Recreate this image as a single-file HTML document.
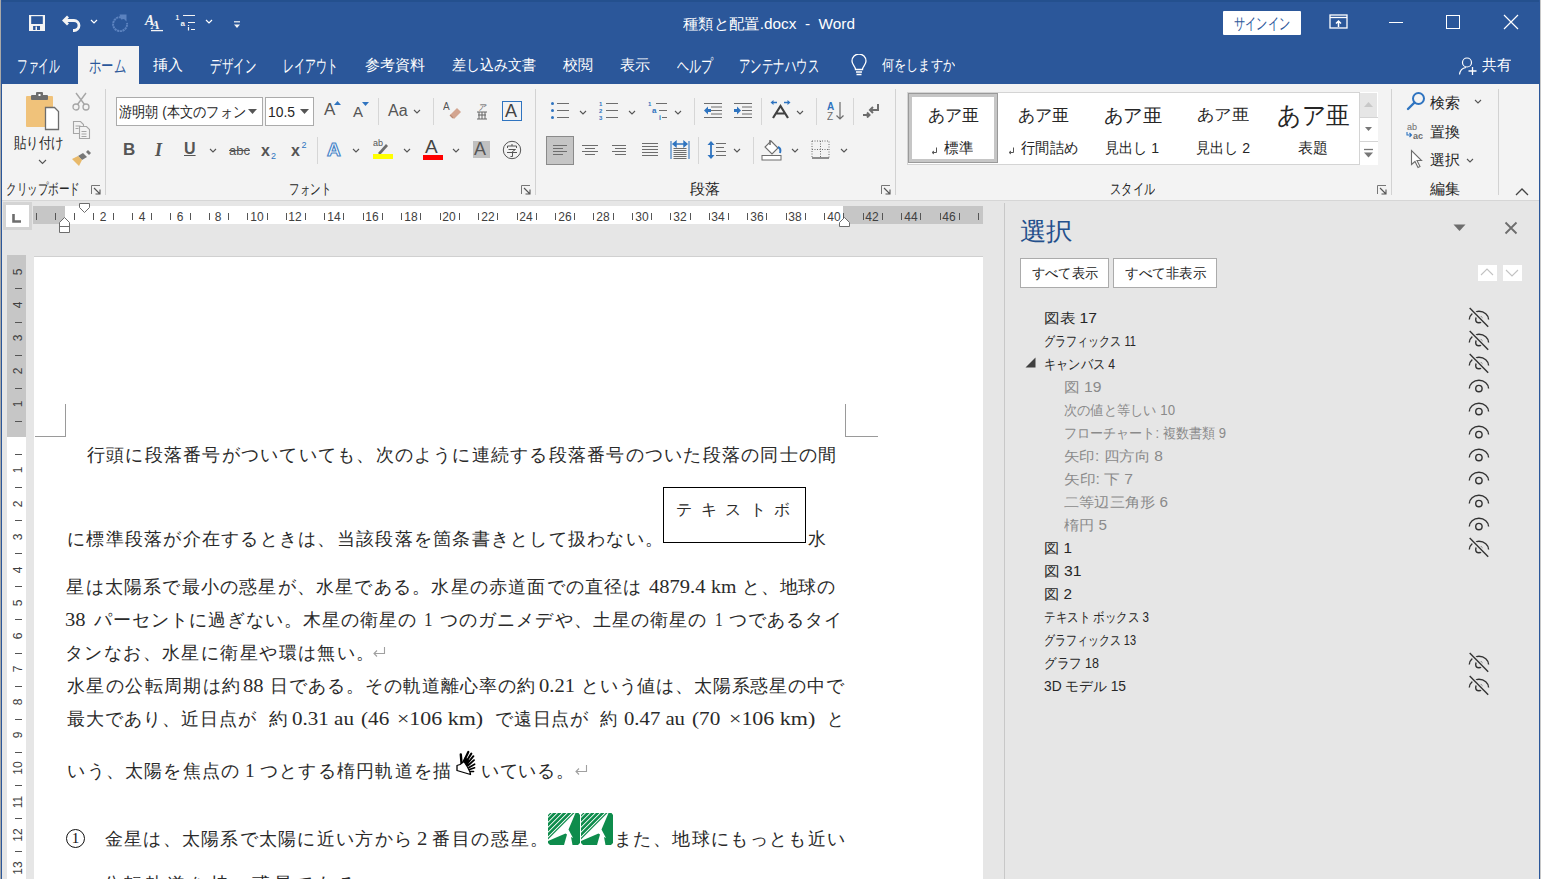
<!DOCTYPE html>
<html><head><meta charset="utf-8">
<style>
*{box-sizing:border-box;margin:0;padding:0}
html,body{width:1541px;height:879px;overflow:hidden;background:#e6e6e6}
body{position:relative;font-family:"Liberation Sans",sans-serif;color:#262626}
.a{position:absolute;white-space:nowrap}
#title{left:0;top:0;width:1541px;height:84px;background:#2b579a}
.tb{color:#fff;font-size:15px;line-height:20px}
.tab{color:#fff;font-size:15px;line-height:20px;top:55px}
#ribbon{left:0;top:84px;width:1541px;height:117px;background:#f3f3f3;border-bottom:1px solid #d6d6d6}
.sep{position:absolute;width:1px;background:#d2d2d2}
.glab{font-size:14px;line-height:18px;color:#262626;top:180px}
.lbl{font-size:14px;line-height:18px;color:#262626}
#doc{left:0;top:201px;width:1004px;height:678px;background:#e6e6e6}
#page{left:34px;top:256px;width:949px;height:640px;background:#fff;border-top:1px solid #d0d0d0}
.t{font-family:"Liberation Serif",serif;font-size:18px;line-height:22px;color:#2a2a2a}
.j{text-align:justify;text-align-last:justify}
#pane{left:1004px;top:203px;width:533px;height:678px;background:#e6e6e6;border-left:1px solid #c8c8c8}
.it{font-size:14px;line-height:18px;color:#262626;left:1044px}
.dim{color:#8a8a8a;left:1064px}
.rn{font-size:12px;line-height:14px;color:#404040;text-align:center}
.vn{font-size:12px;line-height:20px;width:20px;text-align:center;color:#404040;transform:rotate(-90deg);margin-left:2px}
</style></head><body>

<!-- title bar + tabs -->
<div id="title" class="a"></div>
<div class="a" style="left:0;top:0;width:1541px;height:2px;background:#24508e"></div>

<div class="a tb" id="ttl" style="left:683px;top:14px;--w:172;transform:scaleX(1.0232);transform-origin:0 0">種類と配置.docx&nbsp; -&nbsp; Word</div>
<div class="a" style="left:1223px;top:11px;width:78px;height:24px;background:#fff;border-radius:1px"></div>
<div class="a" id="sgn" style="left:1234px;top:13.5px;font-size:16px;line-height:20px;color:#2b579a;--w:56;transform:scaleX(0.7000);transform-origin:0 0">サインイン</div>


<!-- QAT icons -->
<svg class="a" style="left:29px;top:15px" width="17" height="17" viewBox="0 0 17 17"><rect x="0" y="0" width="16" height="16" fill="#f4f4f4"/><rect x="2.2" y="1.2" width="11.6" height="7.8" fill="#2b579a"/><rect x="4.1" y="11" width="6.9" height="4" fill="#2b579a"/><rect x="6.5" y="11.5" width="1.5" height="3.5" fill="#f4f4f4"/></svg>
<svg class="a" style="left:62px;top:15px" width="20" height="17" viewBox="0 0 20 17"><path d="M6 1.5L2 5.5 6 9.5" fill="none" stroke="#f4f4f4" stroke-width="2.8"/><path d="M3 5.5h9a5 5 0 0 1 0 10h-1" fill="none" stroke="#f4f4f4" stroke-width="2.8"/></svg>
<svg class="a" style="left:90px;top:19px" width="8" height="6" viewBox="0 0 8 6"><path d="M1 1l3 3 3-3" fill="none" stroke="#fff" stroke-width="1.2"/></svg>
<svg class="a" style="left:111px;top:14px" width="18" height="18" viewBox="0 0 18 18"><path d="M10 3.2A7 7 0 1 0 16 9" fill="none" stroke="#5b82bf" stroke-width="2" stroke-dasharray="2.2 0.6"/><path d="M8.5 0.5h7v7l-2.5-2.5-3 0.5z" fill="#5b82bf"/></svg>
<svg class="a" style="left:144px;top:13px" width="22" height="19" viewBox="0 0 22 19"><text x="1" y="12" font-family="Liberation Serif" font-style="italic" font-weight="bold" font-size="14" fill="#f4f4f4">A</text><text x="7" y="16" font-family="Liberation Serif" font-style="italic" font-weight="bold" font-size="13" fill="#f4f4f4">A</text><path d="M7 17.6h12" stroke="#f4f4f4" stroke-width="1.3"/></svg>
<svg class="a" style="left:175px;top:13px" width="22" height="19" viewBox="0 0 22 19"><text x="0.5" y="6.5" font-size="6.5" font-weight="bold" fill="#f4f4f4" font-family="Liberation Sans">1</text><text x="5.5" y="12.5" font-size="8" font-weight="bold" fill="#f4f4f4" font-family="Liberation Sans">a</text><path d="M13.5 14v3.5" stroke="#f4f4f4" stroke-width="1.2"/><path d="M13.5 12v1" stroke="#f4f4f4" stroke-width="1.2"/><path d="M8 2.5h12M13 9.5h7M16 16.5h4" stroke="#f4f4f4" stroke-width="1.2"/></svg>
<svg class="a" style="left:205px;top:19px" width="8" height="6" viewBox="0 0 8 6"><path d="M1 1l3 3 3-3" fill="none" stroke="#fff" stroke-width="1.2"/></svg>
<svg class="a" style="left:233px;top:21px" width="8" height="8" viewBox="0 0 8 8"><path d="M1 0.8h6" stroke="#f4f4f4" stroke-width="1.2"/><path d="M1 3.5h6L4 7z" fill="#f4f4f4"/></svg>
<!-- window controls -->
<svg class="a" style="left:1329px;top:14px" width="19" height="15" viewBox="0 0 19 15"><rect x="1" y="1" width="17" height="13" fill="none" stroke="#fff" stroke-width="1.3"/><path d="M1 3.5h17" stroke="#fff" stroke-width="1.3"/><path d="M9.5 13V7M7 9.5l2.5-2.5 2.5 2.5" fill="none" stroke="#fff" stroke-width="1.5"/></svg>
<div class="a" style="left:1389px;top:22px;width:14px;height:1px;background:#fff"></div>
<div class="a" style="left:1446px;top:15px;width:14px;height:14px;border:1px solid #fff"></div>
<svg class="a" style="left:1503px;top:14px" width="16" height="16" viewBox="0 0 16 16"><path d="M1 1l14 14M15 1L1 15" stroke="#fff" stroke-width="1.2"/></svg>
<!-- bulb & share -->
<svg class="a" style="left:850px;top:54px" width="18" height="22" viewBox="0 0 18 22"><path d="M5.5 15.5c0-3-3.5-4.5-3.5-8.5a7 7 0 0 1 14 0c0 4-3.5 5.5-3.5 8.5z" fill="none" stroke="#fff" stroke-width="1.3"/><path d="M6 18h6M6.5 20.5h5" stroke="#fff" stroke-width="1.3"/></svg>
<svg class="a" style="left:1458px;top:56px" width="20" height="20" viewBox="0 0 20 20"><circle cx="9" cy="6.5" r="4.5" fill="none" stroke="#fff" stroke-width="1.2"/><path d="M1.5 18.5c0.5-4 3-6.5 6.5-7" fill="none" stroke="#fff" stroke-width="1.2"/><path d="M14.5 11v8M10.5 15h8" stroke="#fff" stroke-width="1.3"/></svg>

<!-- tabs -->
<div class="a" style="left:78px;top:46px;width:61px;height:38px;background:#f3f3f3"></div>
<div class="a tab" id="tab0" style="left:17px;font-size:18px;top:55.5px;--w:43;transform:scaleX(0.5972);transform-origin:0 0">ファイル</div>
<div class="a tab" id="tab1" style="left:89px;color:#2b579a;font-size:18px;top:55.5px;--w:37;transform:scaleX(0.6852);transform-origin:0 0">ホーム</div>
<div class="a tab" id="tab2" style="left:153px;--w:30;transform:scaleX(1.0000);transform-origin:0 0">挿入</div>
<div class="a tab" id="tab3" style="left:210px;font-size:18px;top:55.5px;--w:46;transform:scaleX(0.6389);transform-origin:0 0">デザイン</div>
<div class="a tab" id="tab4" style="left:283px;font-size:18px;top:55.5px;--w:55;transform:scaleX(0.6111);transform-origin:0 0">レイアウト</div>
<div class="a tab" id="tab5" style="left:365px;--w:60;transform:scaleX(1.0000);transform-origin:0 0">参考資料</div>
<div class="a tab" id="tab6" style="left:452px;--w:84;transform:scaleX(0.9333);transform-origin:0 0">差し込み文書</div>
<div class="a tab" id="tab7" style="left:563px;--w:30;transform:scaleX(1.0000);transform-origin:0 0">校閲</div>
<div class="a tab" id="tab8" style="left:620px;--w:30;transform:scaleX(1.0000);transform-origin:0 0">表示</div>
<div class="a tab" id="tab9" style="left:677px;font-size:18px;top:55.5px;--w:36;transform:scaleX(0.6667);transform-origin:0 0">ヘルプ</div>
<div class="a tab" id="tab10" style="left:739px;font-size:18px;top:55.5px;--w:80;transform:scaleX(0.6349);transform-origin:0 0">アンテナハウス</div>
<div class="a tab" id="tab11" style="left:882px;--w:73;transform:scaleX(0.8111);transform-origin:0 0">何をしますか</div>
<div class="a tab" id="tab12" style="left:1482px;--w:29;transform:scaleX(0.9667);transform-origin:0 0">共有</div>

<!-- ribbon -->
<div id="ribbon" class="a"></div>
<div class="sep" style="left:105px;top:89px;height:106px"></div>
<div class="sep" style="left:535px;top:89px;height:106px"></div>
<div class="sep" style="left:895px;top:89px;height:106px"></div>
<div class="sep" style="left:1391px;top:89px;height:106px"></div>
<div class="sep" style="left:1498px;top:89px;height:106px"></div>
<div class="a glab" id="g1" style="left:6px;top:180px;font-size:15px;--w:74;transform:scaleX(0.7048);transform-origin:0 0">クリップボード</div>
<div class="a glab" id="g2" style="left:289px;top:180px;font-size:15px;--w:42;transform:scaleX(0.7000);transform-origin:0 0">フォント</div>
<div class="a glab" id="g3" style="left:690px;top:180px;font-size:15px;--w:30;transform:scaleX(1.0000);transform-origin:0 0">段落</div>
<div class="a glab" id="g4" style="left:1110px;top:180px;font-size:15px;--w:45;transform:scaleX(0.7500);transform-origin:0 0">スタイル</div>
<div class="a glab" id="g5" style="left:1430px;top:180px;font-size:15px;--w:30;transform:scaleX(1.0000);transform-origin:0 0">編集</div>
<div class="a lbl" id="g6" style="left:14px;top:134px;font-size:15px;--w:50;transform:scaleX(0.8333);transform-origin:0 0">貼り付け</div>


<!-- font boxes -->
<div class="a" style="left:116px;top:97px;width:147px;height:29px;background:#fff;border:1px solid #ababab"></div>
<div class="a" style="left:265px;top:97px;width:49px;height:29px;background:#fff;border:1px solid #ababab"></div>
<div class="a lbl" id="fb1" style="left:119px;top:103px;font-size:15px;--w:127;transform:scaleX(0.8809);transform-origin:0 0">游明朝 (本文のフォン</div>
<div class="a lbl" id="fb2" style="left:268px;top:103px;font-size:15px;--w:27;transform:scaleX(0.9246);transform-origin:0 0">10.5</div>
<!-- clipboard icons -->
<svg class="a" style="left:25px;top:92px" width="37" height="39" viewBox="0 0 37 39"><rect x="1" y="4" width="27" height="31" rx="1" fill="#f0c27a"/><rect x="6" y="3" width="17" height="5" rx="1" fill="#6d6d6d"/><rect x="11" y="0" width="7" height="5" rx="1" fill="#6d6d6d"/><rect x="13.5" y="2" width="2" height="2" fill="#fff"/><path d="M20.5 15.5h9l4 4v18h-13z" fill="#fff" stroke="#6d6d6d" stroke-width="1.3"/></svg>
<svg class="a" style="left:38px;top:159px" width="9" height="6" viewBox="0 0 9 6"><path d="M1 1l3.5 3.5L8 1" fill="none" stroke="#555" stroke-width="1.1"/></svg>
<svg class="a" style="left:72px;top:92px" width="18" height="19" viewBox="0 0 18 19"><circle cx="4" cy="15" r="3" fill="none" stroke="#a6a6a6" stroke-width="1.3"/><circle cx="14" cy="15" r="3" fill="none" stroke="#a6a6a6" stroke-width="1.3"/><path d="M5.5 12.5L14 1M12.5 12.5L4 1" stroke="#a6a6a6" stroke-width="1.4"/></svg>
<svg class="a" style="left:72px;top:120px" width="19" height="20" viewBox="0 0 19 20"><path d="M1.5 1.5h7l3 3v9h-10z" fill="#f3f3f3" stroke="#a6a6a6" stroke-width="1.1"/><path d="M7.5 6.5h7l3 3v9h-10z" fill="#f3f3f3" stroke="#a6a6a6" stroke-width="1.1"/><path d="M3.5 6h5M3.5 8.5h3M9.5 11.5h5M9.5 14h5M9.5 16.5h5" stroke="#a6a6a6" stroke-width="1"/></svg>
<svg class="a" style="left:72px;top:150px" width="19" height="17" viewBox="0 0 19 17"><path d="M11 3l4 4-5 3-4-4z" fill="#777"/><path d="M14 2l2-2 3 3-2 2z" fill="#777"/><path d="M6 6l4 4-3 6L0 9z" fill="#e8b96a"/></svg>
<!-- launchers -->
<svg class="a" style="left:91px;top:185px" width="10" height="10" viewBox="0 0 10 10"><path d="M0.5 9V0.5H9" fill="none" stroke="#777" stroke-width="1"/><path d="M3 3l5.5 5.5M9 4.5V9H4.5" fill="none" stroke="#555" stroke-width="1.1"/></svg>
<svg class="a" style="left:521px;top:185px" width="10" height="10" viewBox="0 0 10 10"><path d="M0.5 9V0.5H9" fill="none" stroke="#777" stroke-width="1"/><path d="M3 3l5.5 5.5M9 4.5V9H4.5" fill="none" stroke="#555" stroke-width="1.1"/></svg>
<svg class="a" style="left:881px;top:185px" width="10" height="10" viewBox="0 0 10 10"><path d="M0.5 9V0.5H9" fill="none" stroke="#777" stroke-width="1"/><path d="M3 3l5.5 5.5M9 4.5V9H4.5" fill="none" stroke="#555" stroke-width="1.1"/></svg>
<svg class="a" style="left:1377px;top:185px" width="10" height="10" viewBox="0 0 10 10"><path d="M0.5 9V0.5H9" fill="none" stroke="#777" stroke-width="1"/><path d="M3 3l5.5 5.5M9 4.5V9H4.5" fill="none" stroke="#555" stroke-width="1.1"/></svg>
<!-- font group -->
<svg class="a" style="left:248px;top:109px" width="9" height="5" viewBox="0 0 9 5"><path d="M0 0h9L4.5 5z" fill="#555"/></svg>
<svg class="a" style="left:300px;top:109px" width="9" height="5" viewBox="0 0 9 5"><path d="M0 0h9L4.5 5z" fill="#555"/></svg>
<div class="a" style="left:324px;top:101px;font-size:17px;line-height:18px;color:#555">A</div>
<svg class="a" style="left:334px;top:101px" width="7" height="4"><path d="M0 4L3.5 0 7 4z" fill="#2f74c0"/></svg>
<div class="a" style="left:353px;top:104px;font-size:15px;line-height:16px;color:#555">A</div>
<svg class="a" style="left:362px;top:102px" width="7" height="4"><path d="M0 0h7L3.5 4z" fill="#2f74c0"/></svg>
<div class="sep" style="left:378px;top:98px;height:27px;background:#d6d6d6"></div>
<div class="a" style="left:388px;top:102px;font-size:16px;line-height:18px;color:#555">Aa</div>
<svg class="a" style="left:413px;top:109px" width="8" height="5"><path d="M1 1l3 3 3-3" fill="none" stroke="#555" stroke-width="1.1"/></svg>
<div class="sep" style="left:433px;top:98px;height:27px;background:#d6d6d6"></div>
<svg class="a" style="left:443px;top:101px" width="19" height="19" viewBox="0 0 19 19"><text x="0" y="9" font-size="10" fill="#555" font-family="Liberation Sans">A</text><path d="M7 14l7-7 4 4-7 7z" fill="#d3a590"/><path d="M7 14l3 3" stroke="#b98a74" stroke-width="1.2"/></svg>
<svg class="a" style="left:475px;top:102px" width="14" height="18" viewBox="0 0 14 18"><text x="3" y="8" font-size="8" fill="#555" font-family="Liberation Sans" font-style="italic">ア</text><path d="M2 10h10M3 13h8M2 17h10M7 10v7M4 10v7M10 10v7" stroke="#666" stroke-width="1"/></svg>
<div class="a" style="left:502px;top:101px;width:20px;height:20px;border:1.3px solid #2f74c0"></div>
<div class="a" style="left:505px;top:102px;font-size:18px;line-height:18px;color:#444">A</div>
<div class="a" style="left:123px;top:141px;font-size:17px;line-height:18px;font-weight:bold;color:#555">B</div>
<div class="a" style="left:155px;top:141px;font-family:'Liberation Serif',serif;font-size:18px;line-height:18px;font-style:italic;font-weight:bold;color:#555">I</div>
<div class="a" style="left:184px;top:140px;font-size:16px;line-height:18px;font-weight:bold;color:#555;text-decoration:underline">U</div>
<svg class="a" style="left:209px;top:148px" width="8" height="5"><path d="M1 1l3 3 3-3" fill="none" stroke="#555" stroke-width="1.1"/></svg>
<div class="a" style="left:229px;top:143px;font-size:13px;line-height:16px;color:#555;text-decoration:line-through">abc</div>
<svg class="a" style="left:261px;top:140px" width="17" height="20" viewBox="0 0 17 20"><text x="0" y="16" font-size="16" font-weight="bold" fill="#555" font-family="Liberation Sans">x</text><text x="10" y="19" font-size="9" fill="#2f74c0" font-family="Liberation Sans">2</text></svg>
<svg class="a" style="left:291px;top:140px" width="17" height="18" viewBox="0 0 17 18"><text x="0" y="16" font-size="16" font-weight="bold" fill="#555" font-family="Liberation Sans">x</text><text x="10.5" y="8" font-size="9" fill="#2f74c0" font-family="Liberation Sans">2</text></svg>
<div class="sep" style="left:317px;top:137px;height:27px;background:#d6d6d6"></div>
<div class="a" style="left:327px;top:140px;font-size:19px;line-height:20px;font-weight:bold;color:#fff;-webkit-text-stroke:1.2px #4a86c8">A</div>
<svg class="a" style="left:352px;top:148px" width="8" height="5"><path d="M1 1l3 3 3-3" fill="none" stroke="#555" stroke-width="1.1"/></svg>
<svg class="a" style="left:373px;top:138px" width="22" height="22" viewBox="0 0 22 22"><text x="0" y="8" font-size="9" fill="#555" font-family="Liberation Sans">ab</text><path d="M5 15l8-9 2 2-8 9z" fill="#6d6d6d"/><rect x="0" y="16" width="20" height="5" fill="#ffff00"/></svg>
<svg class="a" style="left:403px;top:148px" width="8" height="5"><path d="M1 1l3 3 3-3" fill="none" stroke="#555" stroke-width="1.1"/></svg>
<div class="a" style="left:425px;top:137px;font-size:19px;line-height:20px;color:#444">A</div>
<div class="a" style="left:423px;top:155px;width:20px;height:5px;background:#ff0000"></div>
<svg class="a" style="left:452px;top:148px" width="8" height="5"><path d="M1 1l3 3 3-3" fill="none" stroke="#555" stroke-width="1.1"/></svg>
<div class="a" style="left:473px;top:141px;width:17px;height:17px;background:#c0c0c0"></div>
<div class="a" style="left:474px;top:139px;font-size:18px;line-height:20px;color:#555">A</div>
<svg class="a" style="left:502px;top:140px" width="20" height="20" viewBox="0 0 20 20"><circle cx="10" cy="10" r="8.7" fill="none" stroke="#555" stroke-width="1"/><path d="M5.5 8v-2h9v2M10 4v2M6.5 9.5h7l-3 2v5l-2 0M5 12.5h10" fill="none" stroke="#555" stroke-width="1"/></svg>

<svg class="a" style="left:550px;top:101px" width="21" height="19" viewBox="0 0 21 19"><circle cx="2.5" cy="2.5" r="1.5" fill="#2f74c0"/><circle cx="2.5" cy="9.5" r="1.5" fill="#2f74c0"/><circle cx="2.5" cy="16.5" r="1.5" fill="#2f74c0"/><path d="M7 2.5h12M7 9.5h12M7 16.5h12" stroke="#6d6d6d" stroke-width="1.1"/></svg>
<svg class="a" style="left:579px;top:110px" width="8" height="5"><path d="M1 1l3 3 3-3" fill="none" stroke="#555" stroke-width="1.1"/></svg>
<svg class="a" style="left:598px;top:100px" width="21" height="20" viewBox="0 0 21 20"><text x="1" y="6" font-size="6" font-weight="bold" fill="#2f74c0" font-family="Liberation Sans">1</text><text x="1" y="13" font-size="6" font-weight="bold" fill="#2f74c0" font-family="Liberation Sans">2</text><text x="1" y="20" font-size="6" font-weight="bold" fill="#2f74c0" font-family="Liberation Sans">3</text><path d="M8 3.5h12M8 10.5h12M8 17.5h12" stroke="#6d6d6d" stroke-width="1.1"/></svg>
<svg class="a" style="left:628px;top:110px" width="8" height="5"><path d="M1 1l3 3 3-3" fill="none" stroke="#555" stroke-width="1.1"/></svg>
<svg class="a" style="left:647px;top:100px" width="21" height="20" viewBox="0 0 21 20"><text x="1" y="6" font-size="6" font-weight="bold" fill="#2f74c0" font-family="Liberation Sans">1</text><text x="5" y="13" font-size="8" font-weight="bold" fill="#2f74c0" font-family="Liberation Sans">a</text><text x="12" y="20" font-size="7" font-weight="bold" fill="#2f74c0" font-family="Liberation Sans">i</text><path d="M9 3.5h11M12 10.5h8M15 17.5h5" stroke="#6d6d6d" stroke-width="1.1"/></svg>
<svg class="a" style="left:674px;top:110px" width="8" height="5"><path d="M1 1l3 3 3-3" fill="none" stroke="#555" stroke-width="1.1"/></svg>
<div class="sep" style="left:694px;top:98px;height:27px;background:#d6d6d6"></div>
<svg class="a" style="left:703px;top:102px" width="20" height="17" viewBox="0 0 20 17"><path d="M1 1.5h18M8 5h11M8 8.5h11M8 12h11M1 15.5h18" stroke="#6d6d6d" stroke-width="1.1"/><path d="M1 8.5l4-4v2.5h3v3H5v2.5z" fill="#2f74c0"/></svg>
<svg class="a" style="left:733px;top:102px" width="20" height="17" viewBox="0 0 20 17"><path d="M1 1.5h18M9 5h10M9 8.5h10M9 12h10M1 15.5h18" stroke="#6d6d6d" stroke-width="1.1"/><path d="M8 8.5l-4-4v2.5H1v3h3v2.5z" fill="#2f74c0"/></svg>
<div class="sep" style="left:761px;top:98px;height:27px;background:#d6d6d6"></div>
<svg class="a" style="left:770px;top:100px" width="21" height="19" viewBox="0 0 21 19"><path d="M2 2.5h5M14 2.5h5" stroke="#2f74c0" stroke-width="1.6"/><path d="M0.5 2.5l3-2.5v5zM20.5 2.5l-3-2.5v5z" fill="#2f74c0"/><path d="M3 18L10.5 6 18 18M6 13.5h9" fill="none" stroke="#404040" stroke-width="2.2"/></svg>
<svg class="a" style="left:796px;top:110px" width="8" height="5"><path d="M1 1l3 3 3-3" fill="none" stroke="#555" stroke-width="1.1"/></svg>
<div class="sep" style="left:816px;top:98px;height:27px;background:#d6d6d6"></div>
<svg class="a" style="left:827px;top:101px" width="18" height="20" viewBox="0 0 18 20"><text x="0" y="9" font-size="10" font-weight="bold" fill="#2f74c0" font-family="Liberation Sans">A</text><text x="0" y="19" font-size="10" fill="#6d6d6d" font-family="Liberation Sans">Z</text><path d="M13 1v17M9.5 14.5L13 18l3.5-3.5" fill="none" stroke="#6d6d6d" stroke-width="1.2"/></svg>
<div class="sep" style="left:853px;top:98px;height:27px;background:#d6d6d6"></div>
<svg class="a" style="left:862px;top:103px" width="18" height="15" viewBox="0 0 18 15"><path d="M16 1v6H9M11 4l-3 3 3 3" fill="none" stroke="#6d6d6d" stroke-width="2"/><path d="M1 12h6M5 9.5l2.5 2.5L5 14.5" fill="none" stroke="#6d6d6d" stroke-width="2"/></svg>
<div class="a" style="left:546px;top:136px;width:28px;height:29px;background:#c5c5c5;border:1px solid #8a8a8a"></div>
<svg class="a" style="left:553px;top:141px" width="20" height="20" viewBox="0 0 20 20"><path d="M0 4.5h14M0 7.5h10M0 10.5h14M0 13.5h10" stroke="#6d6d6d" stroke-width="1.1"/></svg>
<svg class="a" style="left:582px;top:141px" width="20" height="20" viewBox="0 0 20 20"><path d="M0 4.5h16M3 7.5h10M0 10.5h16M3 13.5h10" stroke="#6d6d6d" stroke-width="1.1"/></svg>
<svg class="a" style="left:612px;top:141px" width="20" height="20" viewBox="0 0 20 20"><path d="M0 4.5h14M3 7.5h11M0 10.5h14M3 13.5h11" stroke="#6d6d6d" stroke-width="1.1"/></svg>
<svg class="a" style="left:642px;top:141px" width="20" height="20" viewBox="0 0 20 20"><path d="M0 2.5h16M0 5.5h16M0 8.5h16M0 11.5h16M0 14.5h16" stroke="#6d6d6d" stroke-width="1.1"/></svg>
<svg class="a" style="left:670px;top:140px" width="20" height="20" viewBox="0 0 20 20"><path d="M1 1v18M19 1v18" stroke="#2f74c0" stroke-width="1.1"/><path d="M4 4h12M3 4l3-2.5v5zM17 4l-3-2.5v5z" stroke="#2f74c0" fill="#2f74c0" stroke-width="1.4"/><path d="M3.5 8.5h13M3.5 10.5h13M3.5 12.5h13M3.5 14.5h13M3.5 16.5h13M3.5 18.5h13" stroke="#6d6d6d" stroke-width="1"/></svg>
<div class="sep" style="left:698px;top:137px;height:27px;background:#d6d6d6"></div>
<svg class="a" style="left:707px;top:140px" width="20" height="20" viewBox="0 0 20 20"><path d="M4 3v14" stroke="#2f74c0" stroke-width="1.8"/><path d="M0.5 5L4 1l3.5 4zM0.5 15L4 19l3.5-4z" fill="#2f74c0"/><path d="M9 3.5h10M9 7.5h8M9 11.5h10M9 15.5h10" stroke="#6d6d6d" stroke-width="1.1"/></svg>
<svg class="a" style="left:733px;top:148px" width="8" height="5"><path d="M1 1l3 3 3-3" fill="none" stroke="#555" stroke-width="1.1"/></svg>
<div class="sep" style="left:753px;top:137px;height:27px;background:#d6d6d6"></div>
<svg class="a" style="left:761px;top:139px" width="22" height="22" viewBox="0 0 22 22"><path d="M10 2l7 7-6 6-7-7z" fill="#fff" stroke="#6d6d6d" stroke-width="1.1"/><path d="M9 1v5" stroke="#6d6d6d" stroke-width="1.5"/><path d="M17 8c2 1 3 3 2 6" fill="none" stroke="#2f74c0" stroke-width="2"/><rect x="1" y="16.5" width="19" height="4.5" fill="#fff" stroke="#6d6d6d" stroke-width="1"/></svg>
<svg class="a" style="left:791px;top:148px" width="8" height="5"><path d="M1 1l3 3 3-3" fill="none" stroke="#555" stroke-width="1.1"/></svg>
<svg class="a" style="left:811px;top:140px" width="19" height="19" viewBox="0 0 19 19"><path d="M1 1h17v17M1 1v17M9.5 1v17M1 9.5h17" fill="none" stroke="#6d6d6d" stroke-width="1" stroke-dasharray="1 1.5"/><path d="M1 18h17" stroke="#6d6d6d" stroke-width="1.5"/></svg>
<svg class="a" style="left:840px;top:148px" width="8" height="5"><path d="M1 1l3 3 3-3" fill="none" stroke="#555" stroke-width="1.1"/></svg>
<div class="a" style="left:907px;top:92px;width:471px;height:73px;background:#fff;border:1px solid #d4d4d4"></div>
<div class="a" style="left:908px;top:93px;width:90px;height:70px;border:4px solid #c6c6c6;outline:1px solid #9a9a9a;outline-offset:-1px"></div>
<div class="a" id="s1" style="left:928px;top:105px;font-family:'Liberation Serif',serif;font-size:17px;line-height:21px;color:#262626;--w:51;transform:scaleX(1.0000);transform-origin:0 0">あア亜</div>
<div class="a" id="s2" style="left:1018px;top:105px;font-family:'Liberation Serif',serif;font-size:17px;line-height:21px;color:#262626;--w:51;transform:scaleX(1.0000);transform-origin:0 0">あア亜</div>
<div class="a" id="s3" style="left:1104px;top:104px;font-family:'Liberation Serif',serif;font-size:19px;line-height:23px;color:#262626;--w:58;transform:scaleX(1.0175);transform-origin:0 0">あア亜</div>
<div class="a" id="s4" style="left:1197px;top:105px;font-family:'Liberation Serif',serif;font-size:16px;line-height:20px;color:#262626;--w:52;transform:scaleX(1.0833);transform-origin:0 0">あア亜</div>
<div class="a" id="s5" style="left:1277px;top:101px;font-family:'Liberation Serif',serif;font-size:25px;line-height:29px;color:#262626;--w:73;transform:scaleX(0.9481);transform-origin:0 0">あア亜</div>
<div class="a lbl" id="s6" style="left:944px;top:139px;font-size:15px;--w:29;transform:scaleX(0.9667);transform-origin:0 0">標準</div>
<div class="a lbl" id="s7" style="left:1021px;top:139px;font-size:15px;--w:57;transform:scaleX(0.9500);transform-origin:0 0">行間詰め</div>
<div class="a lbl" id="s8" style="left:1105px;top:139px;font-size:15px;--w:54;transform:scaleX(0.9389);transform-origin:0 0">見出し 1</div>
<div class="a lbl" id="s9" style="left:1196px;top:139px;font-size:15px;--w:54;transform:scaleX(0.9389);transform-origin:0 0">見出し 2</div>
<div class="a lbl" id="s10" style="left:1298px;top:139px;font-size:15px;--w:30;transform:scaleX(1.0000);transform-origin:0 0">表題</div>
<svg class="a" style="left:931px;top:147px" width="7" height="8" viewBox="0 0 7 8"><path d="M5.5 0.5v5H1.5M3 4L1 5.5 3 7" fill="none" stroke="#555" stroke-width="1"/></svg>
<svg class="a" style="left:1008px;top:147px" width="7" height="8" viewBox="0 0 7 8"><path d="M5.5 0.5v5H1.5M3 4L1 5.5 3 7" fill="none" stroke="#555" stroke-width="1"/></svg>
<div class="a" style="left:1359px;top:92px;width:19px;height:73px;background:#fff;border-left:1px solid #d4d4d4"></div>
<div class="a" style="left:1360px;top:93px;width:17px;height:24px;background:#e6e6e6"></div>
<div class="a" style="left:1359px;top:117px;width:19px;height:1px;background:#d4d4d4"></div>
<div class="a" style="left:1359px;top:141px;width:19px;height:1px;background:#d4d4d4"></div>
<svg class="a" style="left:1364px;top:102px" width="9" height="5"><path d="M0 5L4.5 0 9 5z" fill="#c8c8c8"/></svg>
<svg class="a" style="left:1365px;top:127px" width="7" height="4"><path d="M0 0h7L3.5 4z" fill="#777"/></svg>
<svg class="a" style="left:1364px;top:148px" width="9" height="10"><path d="M0 1.5h9" stroke="#777" stroke-width="1.3"/><path d="M0 4.5h9L4.5 9.5z" fill="#777"/></svg>
<svg class="a" style="left:1406px;top:91px" width="20" height="20" viewBox="0 0 20 20"><circle cx="12.5" cy="7.5" r="5.5" fill="none" stroke="#2f74c0" stroke-width="2"/><path d="M8.5 11.5L2 18" stroke="#2f74c0" stroke-width="2.4" stroke-linecap="round"/></svg>
<div class="a lbl" id="e1" style="left:1430px;top:94px;font-size:15px;--w:30;transform:scaleX(1.0000);transform-origin:0 0">検索</div>
<svg class="a" style="left:1474px;top:99px" width="8" height="5"><path d="M1 1l3 3 3-3" fill="none" stroke="#555" stroke-width="1.1"/></svg>
<svg class="a" style="left:1405px;top:122px" width="22" height="18" viewBox="0 0 22 18"><text x="2" y="8" font-size="9" fill="#6d6d6d" font-family="Liberation Sans">ab</text><text x="8" y="17" font-size="9" fill="#6d6d6d" font-family="Liberation Sans" font-weight="bold">ac</text><path d="M2 10v3h4M4.5 11l2 2-2 2" fill="none" stroke="#2f74c0" stroke-width="1.1"/></svg>
<div class="a lbl" id="e2" style="left:1430px;top:123px;font-size:15px;--w:30;transform:scaleX(1.0000);transform-origin:0 0">置換</div>
<svg class="a" style="left:1410px;top:149px" width="14" height="20" viewBox="0 0 14 20"><path d="M1.5 1.5v14l3.5-3 3 6 2-1-3-6h4.5z" fill="#fff" stroke="#6d6d6d" stroke-width="1.1"/></svg>
<div class="a lbl" id="e3" style="left:1430px;top:151px;font-size:15px;--w:30;transform:scaleX(1.0000);transform-origin:0 0">選択</div>
<svg class="a" style="left:1466px;top:158px" width="8" height="5"><path d="M1 1l3 3 3-3" fill="none" stroke="#555" stroke-width="1.1"/></svg>
<svg class="a" style="left:1515px;top:187px" width="14" height="9" viewBox="0 0 14 9"><path d="M1 8l6-6 6 6" fill="none" stroke="#444" stroke-width="1.3"/></svg>



<!-- doc area -->
<div id="doc" class="a"></div>
<div id="page" class="a"></div>

<div class="a" style="left:3px;top:202px;width:29px;height:28px;background:#fff;border:3px solid #d4d4d4"></div>
<svg class="a" style="left:12px;top:213px" width="10" height="10" viewBox="0 0 10 10"><path d="M1.5 1v7.5H9" fill="none" stroke="#6d6d6d" stroke-width="2.6"/></svg>
<div class="a" style="left:33px;top:206px;width:950px;height:18px;background:#c6c6c6"></div>
<div class="a" style="left:65px;top:206px;width:778px;height:18px;background:#fff"></div>
<div class="a" style="left:36px;top:213px;width:1px;height:7px;background:#555"></div>
<div class="a" style="left:55px;top:213px;width:1px;height:7px;background:#555"></div>
<div class="a" style="left:74px;top:213px;width:1px;height:7px;background:#555"></div>
<div class="a" style="left:93px;top:213px;width:1px;height:7px;background:#555"></div>
<div class="a" style="left:113px;top:213px;width:1px;height:7px;background:#555"></div>
<div class="a" style="left:132px;top:213px;width:1px;height:7px;background:#555"></div>
<div class="a" style="left:151px;top:213px;width:1px;height:7px;background:#555"></div>
<div class="a" style="left:170px;top:213px;width:1px;height:7px;background:#555"></div>
<div class="a" style="left:190px;top:213px;width:1px;height:7px;background:#555"></div>
<div class="a" style="left:209px;top:213px;width:1px;height:7px;background:#555"></div>
<div class="a" style="left:228px;top:213px;width:1px;height:7px;background:#555"></div>
<div class="a" style="left:247px;top:213px;width:1px;height:7px;background:#555"></div>
<div class="a" style="left:267px;top:213px;width:1px;height:7px;background:#555"></div>
<div class="a" style="left:286px;top:213px;width:1px;height:7px;background:#555"></div>
<div class="a" style="left:305px;top:213px;width:1px;height:7px;background:#555"></div>
<div class="a" style="left:324px;top:213px;width:1px;height:7px;background:#555"></div>
<div class="a" style="left:343px;top:213px;width:1px;height:7px;background:#555"></div>
<div class="a" style="left:363px;top:213px;width:1px;height:7px;background:#555"></div>
<div class="a" style="left:382px;top:213px;width:1px;height:7px;background:#555"></div>
<div class="a" style="left:401px;top:213px;width:1px;height:7px;background:#555"></div>
<div class="a" style="left:420px;top:213px;width:1px;height:7px;background:#555"></div>
<div class="a" style="left:440px;top:213px;width:1px;height:7px;background:#555"></div>
<div class="a" style="left:459px;top:213px;width:1px;height:7px;background:#555"></div>
<div class="a" style="left:478px;top:213px;width:1px;height:7px;background:#555"></div>
<div class="a" style="left:497px;top:213px;width:1px;height:7px;background:#555"></div>
<div class="a" style="left:517px;top:213px;width:1px;height:7px;background:#555"></div>
<div class="a" style="left:536px;top:213px;width:1px;height:7px;background:#555"></div>
<div class="a" style="left:555px;top:213px;width:1px;height:7px;background:#555"></div>
<div class="a" style="left:574px;top:213px;width:1px;height:7px;background:#555"></div>
<div class="a" style="left:593px;top:213px;width:1px;height:7px;background:#555"></div>
<div class="a" style="left:613px;top:213px;width:1px;height:7px;background:#555"></div>
<div class="a" style="left:632px;top:213px;width:1px;height:7px;background:#555"></div>
<div class="a" style="left:651px;top:213px;width:1px;height:7px;background:#555"></div>
<div class="a" style="left:670px;top:213px;width:1px;height:7px;background:#555"></div>
<div class="a" style="left:690px;top:213px;width:1px;height:7px;background:#555"></div>
<div class="a" style="left:709px;top:213px;width:1px;height:7px;background:#555"></div>
<div class="a" style="left:728px;top:213px;width:1px;height:7px;background:#555"></div>
<div class="a" style="left:747px;top:213px;width:1px;height:7px;background:#555"></div>
<div class="a" style="left:766px;top:213px;width:1px;height:7px;background:#555"></div>
<div class="a" style="left:786px;top:213px;width:1px;height:7px;background:#555"></div>
<div class="a" style="left:805px;top:213px;width:1px;height:7px;background:#555"></div>
<div class="a" style="left:824px;top:213px;width:1px;height:7px;background:#555"></div>
<div class="a" style="left:843px;top:213px;width:1px;height:7px;background:#555"></div>
<div class="a" style="left:863px;top:213px;width:1px;height:7px;background:#555"></div>
<div class="a" style="left:882px;top:213px;width:1px;height:7px;background:#555"></div>
<div class="a" style="left:901px;top:213px;width:1px;height:7px;background:#555"></div>
<div class="a" style="left:920px;top:213px;width:1px;height:7px;background:#555"></div>
<div class="a" style="left:940px;top:213px;width:1px;height:7px;background:#555"></div>
<div class="a" style="left:959px;top:213px;width:1px;height:7px;background:#555"></div>
<div class="a" style="left:978px;top:213px;width:1px;height:7px;background:#555"></div>
<div class="a rn" style="left:91px;top:210px;width:24px">2</div>
<div class="a rn" style="left:130px;top:210px;width:24px">4</div>
<div class="a rn" style="left:168px;top:210px;width:24px">6</div>
<div class="a rn" style="left:206px;top:210px;width:24px">8</div>
<div class="a rn" style="left:245px;top:210px;width:24px">10</div>
<div class="a rn" style="left:283px;top:210px;width:24px">12</div>
<div class="a rn" style="left:322px;top:210px;width:24px">14</div>
<div class="a rn" style="left:360px;top:210px;width:24px">16</div>
<div class="a rn" style="left:399px;top:210px;width:24px">18</div>
<div class="a rn" style="left:437px;top:210px;width:24px">20</div>
<div class="a rn" style="left:476px;top:210px;width:24px">22</div>
<div class="a rn" style="left:514px;top:210px;width:24px">24</div>
<div class="a rn" style="left:553px;top:210px;width:24px">26</div>
<div class="a rn" style="left:591px;top:210px;width:24px">28</div>
<div class="a rn" style="left:630px;top:210px;width:24px">30</div>
<div class="a rn" style="left:668px;top:210px;width:24px">32</div>
<div class="a rn" style="left:706px;top:210px;width:24px">34</div>
<div class="a rn" style="left:745px;top:210px;width:24px">36</div>
<div class="a rn" style="left:783px;top:210px;width:24px">38</div>
<div class="a rn" style="left:822px;top:210px;width:24px">40</div>
<div class="a rn" style="left:860px;top:210px;width:24px">42</div>
<div class="a rn" style="left:899px;top:210px;width:24px">44</div>
<div class="a rn" style="left:937px;top:210px;width:24px">46</div>
<svg class="a" style="left:78px;top:202px" width="13" height="12" viewBox="0 0 13 12"><path d="M1.5 1.5h10v4l-5 5-5-5z" fill="#fff" stroke="#6d6d6d" stroke-width="1"/></svg>
<svg class="a" style="left:58px;top:216px" width="13" height="18" viewBox="0 0 13 18"><path d="M1.5 16.5v-10l5-5 5 5v10zM1.5 10.5h10" fill="#fff" stroke="#6d6d6d" stroke-width="1"/></svg>
<svg class="a" style="left:838px;top:216px" width="13" height="12" viewBox="0 0 13 12"><path d="M1.5 10.5v-4l5-5 5 5v4z" fill="#fff" stroke="#6d6d6d" stroke-width="1"/></svg>
<div class="a" style="left:7px;top:255px;width:19px;height:624px;background:#fff"></div>
<div class="a" style="left:7px;top:255px;width:19px;height:182px;background:#c6c6c6"></div>
<div class="a" style="left:15px;top:288px;width:7px;height:1px;background:#555"></div>
<div class="a" style="left:15px;top:322px;width:7px;height:1px;background:#555"></div>
<div class="a" style="left:15px;top:355px;width:7px;height:1px;background:#555"></div>
<div class="a" style="left:15px;top:388px;width:7px;height:1px;background:#555"></div>
<div class="a" style="left:15px;top:421px;width:7px;height:1px;background:#555"></div>
<div class="a" style="left:15px;top:454px;width:7px;height:1px;background:#555"></div>
<div class="a" style="left:15px;top:487px;width:7px;height:1px;background:#555"></div>
<div class="a" style="left:15px;top:520px;width:7px;height:1px;background:#555"></div>
<div class="a" style="left:15px;top:553px;width:7px;height:1px;background:#555"></div>
<div class="a" style="left:15px;top:586px;width:7px;height:1px;background:#555"></div>
<div class="a" style="left:15px;top:619px;width:7px;height:1px;background:#555"></div>
<div class="a" style="left:15px;top:653px;width:7px;height:1px;background:#555"></div>
<div class="a" style="left:15px;top:686px;width:7px;height:1px;background:#555"></div>
<div class="a" style="left:15px;top:719px;width:7px;height:1px;background:#555"></div>
<div class="a" style="left:15px;top:752px;width:7px;height:1px;background:#555"></div>
<div class="a" style="left:15px;top:785px;width:7px;height:1px;background:#555"></div>
<div class="a" style="left:15px;top:818px;width:7px;height:1px;background:#555"></div>
<div class="a" style="left:15px;top:851px;width:7px;height:1px;background:#555"></div>
<div class="a vn" style="left:6px;top:262px">5</div>
<div class="a vn" style="left:6px;top:295px">4</div>
<div class="a vn" style="left:6px;top:328px">3</div>
<div class="a vn" style="left:6px;top:361px">2</div>
<div class="a vn" style="left:6px;top:394px">1</div>
<div class="a vn" style="left:6px;top:460px">1</div>
<div class="a vn" style="left:6px;top:494px">2</div>
<div class="a vn" style="left:6px;top:527px">3</div>
<div class="a vn" style="left:6px;top:560px">4</div>
<div class="a vn" style="left:6px;top:593px">5</div>
<div class="a vn" style="left:6px;top:626px">6</div>
<div class="a vn" style="left:6px;top:659px">7</div>
<div class="a vn" style="left:6px;top:692px">8</div>
<div class="a vn" style="left:6px;top:725px">9</div>
<div class="a vn" style="left:6px;top:758px">10</div>
<div class="a vn" style="left:6px;top:792px">11</div>
<div class="a vn" style="left:6px;top:825px">12</div>
<div class="a vn" style="left:6px;top:858px">13</div>
<div class="a" style="left:65px;top:404px;width:1px;height:33px;background:#9a9a9a"></div>
<div class="a" style="left:35px;top:436px;width:31px;height:1px;background:#9a9a9a"></div>
<div class="a" style="left:845px;top:404px;width:1px;height:33px;background:#9a9a9a"></div>
<div class="a" style="left:845px;top:436px;width:33px;height:1px;background:#9a9a9a"></div>

<!-- pane -->
<div id="pane" class="a"></div>
<div class="a" id="pt" style="left:1020px;top:215px;font-size:25px;line-height:32px;color:#24508c;--w:53;transform:scaleX(1.0600);transform-origin:0 0">選択</div>
<div class="a" style="left:1020px;top:258px;width:89px;height:30px;background:#fff;border:1px solid #ababab"></div>
<div class="a" style="left:1113px;top:258px;width:104px;height:30px;background:#fff;border:1px solid #ababab"></div>
<div class="a it" id="pb1" style="left:1032px;top:264px;--w:66;transform:scaleX(0.9429);transform-origin:0 0">すべて表示</div>
<div class="a it" id="pb2" style="left:1125px;top:264px;--w:81;transform:scaleX(0.9643);transform-origin:0 0">すべて非表示</div>
<div class="a it" id="pi0" style="left:1044px;top:309px;--w:53;transform:scaleX(1.1165);transform-origin:0 0">図表 17</div>
<div class="a it" id="pi1" style="left:1044px;top:332px;--w:92;transform:scaleX(0.7901);transform-origin:0 0">グラフィックス 11</div>
<div class="a it" id="pi2" style="left:1044px;top:355px;--w:71;transform:scaleX(0.8692);transform-origin:0 0">キャンバス 4</div>
<div class="a it dim" id="pi3" style="left:1064px;top:378px;--w:37.5;transform:scaleX(1.1204);transform-origin:0 0">図 19</div>
<div class="a it dim" id="pi4" style="left:1064px;top:401px;--w:111;transform:scaleX(0.9449);transform-origin:0 0">次の値と等しい 10</div>
<div class="a it dim" id="pi5" style="left:1064px;top:424px;--w:162;transform:scaleX(0.9339);transform-origin:0 0">フローチャート: 複数書類 9</div>
<div class="a it dim" id="pi6" style="left:1064px;top:447px;--w:99;transform:scaleX(1.1065);transform-origin:0 0">矢印: 四方向 8</div>
<div class="a it dim" id="pi7" style="left:1064px;top:470px;--w:69;transform:scaleX(1.1225);transform-origin:0 0">矢印: 下 7</div>
<div class="a it dim" id="pi8" style="left:1064px;top:493px;--w:104;transform:scaleX(1.0869);transform-origin:0 0">二等辺三角形 6</div>
<div class="a it dim" id="pi9" style="left:1064px;top:516px;--w:43;transform:scaleX(1.0835);transform-origin:0 0">楕円 5</div>
<div class="a it" id="pi10" style="left:1044px;top:539px;--w:28;transform:scaleX(1.0900);transform-origin:0 0">図 1</div>
<div class="a it" id="pi11" style="left:1044px;top:562px;--w:37.5;transform:scaleX(1.1204);transform-origin:0 0">図 31</div>
<div class="a it" id="pi12" style="left:1044px;top:585px;--w:28;transform:scaleX(1.0900);transform-origin:0 0">図 2</div>
<div class="a it" id="pi13" style="left:1044px;top:608px;--w:105;transform:scaleX(0.8230);transform-origin:0 0">テキスト ボックス 3</div>
<div class="a it" id="pi14" style="left:1044px;top:631px;--w:92;transform:scaleX(0.7832);transform-origin:0 0">グラフィックス 13</div>
<div class="a it" id="pi15" style="left:1044px;top:654px;--w:55;transform:scaleX(0.8948);transform-origin:0 0">グラフ 18</div>
<div class="a it" id="pi16" style="left:1044px;top:677px;--w:82;transform:scaleX(0.9850);transform-origin:0 0">3D モデル 15</div>

<svg class="a" style="left:1453px;top:224px" width="13" height="8" viewBox="0 0 13 8"><path d="M0.5 0.5h12L6.5 7z" fill="#6d6d6d"/></svg>
<svg class="a" style="left:1504px;top:221px" width="14" height="14" viewBox="0 0 14 14"><path d="M1.5 1.5l11 11M12.5 1.5l-11 11" stroke="#6d6d6d" stroke-width="1.8"/></svg>
<div class="a" style="left:1478px;top:265px;width:19px;height:16px;background:#fff"></div>
<div class="a" style="left:1503px;top:265px;width:19px;height:16px;background:#fff"></div>
<svg class="a" style="left:1480px;top:268px" width="14" height="8" viewBox="0 0 14 8"><path d="M1 7l6-6 6 6" fill="none" stroke="#c2c2c2" stroke-width="1.1"/></svg>
<svg class="a" style="left:1505px;top:269px" width="14" height="8" viewBox="0 0 14 8"><path d="M1 1l6 6 6-6" fill="none" stroke="#c2c2c2" stroke-width="1.1"/></svg>
<svg class="a" style="left:1025px;top:357px" width="11" height="11" viewBox="0 0 11 11"><path d="M10.5 0.5v10H0.5z" fill="#404040"/></svg>
<svg class="a" style="left:1468px;top:307px" width="22" height="22" viewBox="0 0 22 22"><path d="M1.3 12.6A9.65 8.3 0 0 1 20.6 12.6" fill="none" stroke="#333" stroke-width="1.4"/><circle cx="10.9" cy="12.6" r="3.2" fill="none" stroke="#333" stroke-width="1.4"/><path d="M1.7 1L20.2 19.7" stroke="#e6e6e6" stroke-width="4"/><path d="M1.7 1L20.2 19.7" stroke="#333" stroke-width="1.4"/></svg>
<svg class="a" style="left:1468px;top:330px" width="22" height="22" viewBox="0 0 22 22"><path d="M1.3 12.6A9.65 8.3 0 0 1 20.6 12.6" fill="none" stroke="#333" stroke-width="1.4"/><circle cx="10.9" cy="12.6" r="3.2" fill="none" stroke="#333" stroke-width="1.4"/><path d="M1.7 1L20.2 19.7" stroke="#e6e6e6" stroke-width="4"/><path d="M1.7 1L20.2 19.7" stroke="#333" stroke-width="1.4"/></svg>
<svg class="a" style="left:1468px;top:353px" width="22" height="22" viewBox="0 0 22 22"><path d="M1.3 12.6A9.65 8.3 0 0 1 20.6 12.6" fill="none" stroke="#333" stroke-width="1.4"/><circle cx="10.9" cy="12.6" r="3.2" fill="none" stroke="#333" stroke-width="1.4"/><path d="M1.7 1L20.2 19.7" stroke="#e6e6e6" stroke-width="4"/><path d="M1.7 1L20.2 19.7" stroke="#333" stroke-width="1.4"/></svg>
<svg class="a" style="left:1468px;top:537px" width="22" height="22" viewBox="0 0 22 22"><path d="M1.3 12.6A9.65 8.3 0 0 1 20.6 12.6" fill="none" stroke="#333" stroke-width="1.4"/><circle cx="10.9" cy="12.6" r="3.2" fill="none" stroke="#333" stroke-width="1.4"/><path d="M1.7 1L20.2 19.7" stroke="#e6e6e6" stroke-width="4"/><path d="M1.7 1L20.2 19.7" stroke="#333" stroke-width="1.4"/></svg>
<svg class="a" style="left:1468px;top:652px" width="22" height="22" viewBox="0 0 22 22"><path d="M1.3 12.6A9.65 8.3 0 0 1 20.6 12.6" fill="none" stroke="#333" stroke-width="1.4"/><circle cx="10.9" cy="12.6" r="3.2" fill="none" stroke="#333" stroke-width="1.4"/><path d="M1.7 1L20.2 19.7" stroke="#e6e6e6" stroke-width="4"/><path d="M1.7 1L20.2 19.7" stroke="#333" stroke-width="1.4"/></svg>
<svg class="a" style="left:1468px;top:675px" width="22" height="22" viewBox="0 0 22 22"><path d="M1.3 12.6A9.65 8.3 0 0 1 20.6 12.6" fill="none" stroke="#333" stroke-width="1.4"/><circle cx="10.9" cy="12.6" r="3.2" fill="none" stroke="#333" stroke-width="1.4"/><path d="M1.7 1L20.2 19.7" stroke="#e6e6e6" stroke-width="4"/><path d="M1.7 1L20.2 19.7" stroke="#333" stroke-width="1.4"/></svg>
<svg class="a" style="left:1468px;top:376px" width="22" height="22" viewBox="0 0 22 22"><path d="M1.3 12.6A9.65 8.3 0 0 1 20.6 12.6" fill="none" stroke="#333" stroke-width="1.4"/><circle cx="10.9" cy="12.6" r="3.2" fill="none" stroke="#333" stroke-width="1.4"/></svg>
<svg class="a" style="left:1468px;top:399px" width="22" height="22" viewBox="0 0 22 22"><path d="M1.3 12.6A9.65 8.3 0 0 1 20.6 12.6" fill="none" stroke="#333" stroke-width="1.4"/><circle cx="10.9" cy="12.6" r="3.2" fill="none" stroke="#333" stroke-width="1.4"/></svg>
<svg class="a" style="left:1468px;top:422px" width="22" height="22" viewBox="0 0 22 22"><path d="M1.3 12.6A9.65 8.3 0 0 1 20.6 12.6" fill="none" stroke="#333" stroke-width="1.4"/><circle cx="10.9" cy="12.6" r="3.2" fill="none" stroke="#333" stroke-width="1.4"/></svg>
<svg class="a" style="left:1468px;top:445px" width="22" height="22" viewBox="0 0 22 22"><path d="M1.3 12.6A9.65 8.3 0 0 1 20.6 12.6" fill="none" stroke="#333" stroke-width="1.4"/><circle cx="10.9" cy="12.6" r="3.2" fill="none" stroke="#333" stroke-width="1.4"/></svg>
<svg class="a" style="left:1468px;top:468px" width="22" height="22" viewBox="0 0 22 22"><path d="M1.3 12.6A9.65 8.3 0 0 1 20.6 12.6" fill="none" stroke="#333" stroke-width="1.4"/><circle cx="10.9" cy="12.6" r="3.2" fill="none" stroke="#333" stroke-width="1.4"/></svg>
<svg class="a" style="left:1468px;top:491px" width="22" height="22" viewBox="0 0 22 22"><path d="M1.3 12.6A9.65 8.3 0 0 1 20.6 12.6" fill="none" stroke="#333" stroke-width="1.4"/><circle cx="10.9" cy="12.6" r="3.2" fill="none" stroke="#333" stroke-width="1.4"/></svg>
<svg class="a" style="left:1468px;top:514px" width="22" height="22" viewBox="0 0 22 22"><path d="M1.3 12.6A9.65 8.3 0 0 1 20.6 12.6" fill="none" stroke="#333" stroke-width="1.4"/><circle cx="10.9" cy="12.6" r="3.2" fill="none" stroke="#333" stroke-width="1.4"/></svg>



<!-- document text -->
<div class="a t j" id="d1" style="left:87.0px;top:444px;width:749.0px">行頭に段落番号がついていても、次のように連続する段落番号のついた段落の同士の間</div>
<div class="a t j" id="d2" style="left:67.0px;top:528px;width:596.0px">に標準段落が介在するときは、当該段落を箇条書きとして扱わない。</div>
<div class="a t j" id="d3" style="left:66.4px;top:576px;width:575.0px">星は太陽系で最小の惑星が、水星である。水星の赤道面での直径は</div>
<div class="a t" id="d4" style="left:648.8px;top:576px;font-size:19px;transform:scaleX(1.0809);transform-origin:0 0">4879.4</div>
<div class="a t" id="d5" style="left:711.0px;top:576px;font-size:19px;transform:scaleX(1.0417);transform-origin:0 0">km</div>
<div class="a t j" id="d6" style="left:742.0px;top:576px;width:93.0px">と、地球の</div>
<div class="a t" id="d7" style="left:65.0px;top:609px;font-size:19px;transform:scaleX(1.0840);transform-origin:0 0">38</div>
<div class="a t j" id="d8" style="left:93.8px;top:609px;width:322.0px">パーセントに過ぎない。木星の衛星の</div>
<div class="a t" id="d9" style="left:423.6px;top:609px;font-size:19px;transform:scaleX(0.9034);transform-origin:0 0">1</div>
<div class="a t j" id="d10" style="left:440.2px;top:609px;width:265.8px">つのガニメデや、土星の衛星の</div>
<div class="a t" id="d11" style="left:714.6px;top:609px;font-size:19px;transform:scaleX(0.8151);transform-origin:0 0">1</div>
<div class="a t j" id="d12" style="left:729.2px;top:609px;width:112.8px">つであるタイ</div>
<div class="a t j" id="d13" style="left:65.0px;top:642px;width:309.2px">タンなお、水星に衛星や環は無い。</div>
<div class="a t j" id="d14" style="left:67.0px;top:675px;width:173.0px">水星の公転周期は約</div>
<div class="a t" id="d15" style="left:243.4px;top:675px;font-size:19px;transform:scaleX(1.0840);transform-origin:0 0">88</div>
<div class="a t j" id="d16" style="left:270.0px;top:675px;width:265.0px">日である。その軌道離心率の約</div>
<div class="a t" id="d17" style="left:539.0px;top:675px;font-size:19px;transform:scaleX(1.0814);transform-origin:0 0">0.21</div>
<div class="a t j" id="d18" style="left:581.0px;top:675px;width:262.8px">という値は、太陽系惑星の中で</div>
<div class="a t j" id="d19" style="left:67.0px;top:708px;width:189.4px">最大であり、近日点が</div>
<div class="a t" id="d20" style="left:269.0px;top:708px;transform:scaleX(1.0302);transform-origin:0 0">約</div>
<div class="a t" id="d21" style="left:292.4px;top:708px;font-size:19px;transform:scaleX(1.1074);transform-origin:0 0">0.31 au</div>
<div class="a t" id="d22" style="left:360.6px;top:708px;font-size:19px;transform:scaleX(1.1137);transform-origin:0 0">(46</div>
<div class="a t" id="d23" style="left:397.0px;top:708px;font-size:19px;transform:scaleX(1.1535);transform-origin:0 0">×106 km)</div>
<div class="a t j" id="d24" style="left:495.0px;top:708px;width:93.0px">で遠日点が</div>
<div class="a t" id="d25" style="left:600.4px;top:708px;transform:scaleX(0.9590);transform-origin:0 0">約</div>
<div class="a t" id="d26" style="left:624.0px;top:708px;font-size:19px;transform:scaleX(1.0896);transform-origin:0 0">0.47 au</div>
<div class="a t" id="d27" style="left:691.8px;top:708px;font-size:19px;transform:scaleX(1.1171);transform-origin:0 0">(70</div>
<div class="a t" id="d28" style="left:729.2px;top:708px;font-size:19px;transform:scaleX(1.1562);transform-origin:0 0">×106 km)</div>
<div class="a t" id="d29" style="left:826.6px;top:708px;transform:scaleX(0.9464);transform-origin:0 0">と</div>
<div class="a t j" id="d30" style="left:67.4px;top:760px;width:171.6px">いう、太陽を焦点の</div>
<div class="a t" id="d31" style="left:244.6px;top:760px;font-size:19px;transform:scaleX(1.0209);transform-origin:0 0">1</div>
<div class="a t j" id="d32" style="left:260.0px;top:760px;width:191.0px">つとする楕円軌道を描</div>
<div class="a t j" id="d33" style="left:480.8px;top:760px;width:93.2px">いている。</div>
<div class="a t j" id="d34" style="left:104.8px;top:828px;width:307.0px">金星は、太陽系で太陽に近い方から</div>
<div class="a t" id="d35" style="left:416.8px;top:828px;font-size:19px;transform:scaleX(1.0879);transform-origin:0 0">2</div>
<div class="a t j" id="d36" style="left:432.0px;top:828px;width:116.2px">番目の惑星。</div>
<div class="a t j" id="d37" style="left:614.0px;top:828px;width:231.2px">また、地球にもっとも近い</div>
<div class="a t j" id="d38" style="left:103.0px;top:873px;width:274.0px">公転軌道を持つ惑星である。</div>
<div class="a" style="left:663px;top:487px;width:143px;height:56px;border:1px solid #000;background:#fff"></div>
<div class="a t j" id="TB" style="left:676.4px;top:499px;width:113.5px;font-size:16px">テキストボ</div>
<div class="a t" id="d_mizu" style="left:808px;top:528px">水</div>
<div class="a" style="left:66px;top:829px;width:19px;height:19px;border:1px solid #111;border-radius:50%"></div>
<div class="a" style="left:66px;top:827px;width:19px;text-align:center;font-family:'Liberation Serif',serif;font-size:15px;line-height:22px;color:#111">1</div>
<!-- para marks -->
<svg class="a" style="left:372px;top:646px" width="14" height="12" viewBox="0 0 14 12"><path d="M12.5 1v6.5H2M5 4.5L2 7.5 5 10.5" fill="none" stroke="#a0a0a0" stroke-width="1.1"/></svg>
<svg class="a" style="left:574px;top:764px" width="14" height="12" viewBox="0 0 14 12"><path d="M12.5 1v6.5H2M5 4.5L2 7.5 5 10.5" fill="none" stroke="#a0a0a0" stroke-width="1.1"/></svg>
<!-- hand icon -->
<svg class="a" style="left:455px;top:750px" width="24" height="28" viewBox="0 0 24 28"><path d="M7.0 13.5 L10.0 7.0 L14.0 10.0 L13.0 16.0 z" fill="#000"/><path d="M6.5 13.0 L5.8 4.5" stroke="#000" stroke-width="2.4" stroke-linecap="round"/><path d="M8.5 12.0 L13.3 2.0" stroke="#000" stroke-width="2.2" stroke-linecap="round"/><path d="M10.5 13.0 L16.3 3.6" stroke="#000" stroke-width="2.0" stroke-linecap="round"/><path d="M12.0 14.0 L18.4 6.2" stroke="#000" stroke-width="1.9" stroke-linecap="round"/><path d="M13.0 15.5 L19.0 10.2" stroke="#000" stroke-width="1.8" stroke-linecap="round"/><path d="M14.0 17.5 L19.6 14.2" stroke="#000" stroke-width="1.7" stroke-linecap="round"/><path d="M14.5 19.5 L19.6 17.8" stroke="#000" stroke-width="1.6" stroke-linecap="round"/><path d="M14.5 21.5 L18.6 21.4" stroke="#000" stroke-width="1.5" stroke-linecap="round"/><path d="M2.0 15.5 L5.0 14.5 L9.0 11.5 L12.5 17.0 L15.0 22.0 L15.5 24.5 L2.0 20.5 z" fill="#fff" stroke="#000" stroke-width="1.3" stroke-linejoin="round"/></svg>
<!-- green logo -->
<svg class="a" style="left:548px;top:813px" width="65" height="32" viewBox="0 0 65 32">
<defs><pattern id="hp" patternUnits="userSpaceOnUse" width="3.5" height="3.5" patternTransform="rotate(45)"><rect x="0" y="0" width="2.6" height="3.5" fill="#0e8c4c"/></pattern>
</defs>
<g><path d="M0 2L2 0H26.5L0 26.5z" fill="url(#hp)"/><path d="M27.5 0h3l1.5 2v28l-2 2h-5.5l-1.5-8 2 1-4.5-8.5z" fill="#0e8c4c"/><path d="M0 28l17.5-7.5 1.5 1-3 10.5H2l-2-2z" fill="#0e8c4c"/></g><g transform="translate(33 0)"><path d="M0 2L2 0H26.5L0 26.5z" fill="url(#hp)"/><path d="M27.5 0h3l1.5 2v28l-2 2h-5.5l-1.5-8 2 1-4.5-8.5z" fill="#0e8c4c"/><path d="M0 28l17.5-7.5 1.5 1-3 10.5H2l-2-2z" fill="#0e8c4c"/></g></svg>
<div class="a" style="left:0;top:0;width:1px;height:879px;background:#a8a8a8"></div><div class="a" style="left:1px;top:0;width:1px;height:879px;background:#2b579a"></div>
<div class="a" style="left:1539px;top:0;width:1px;height:879px;background:#2b579a"></div>
<div class="a" style="left:1540px;top:0;width:1px;height:879px;background:#c8c8c8"></div>
</body></html>
